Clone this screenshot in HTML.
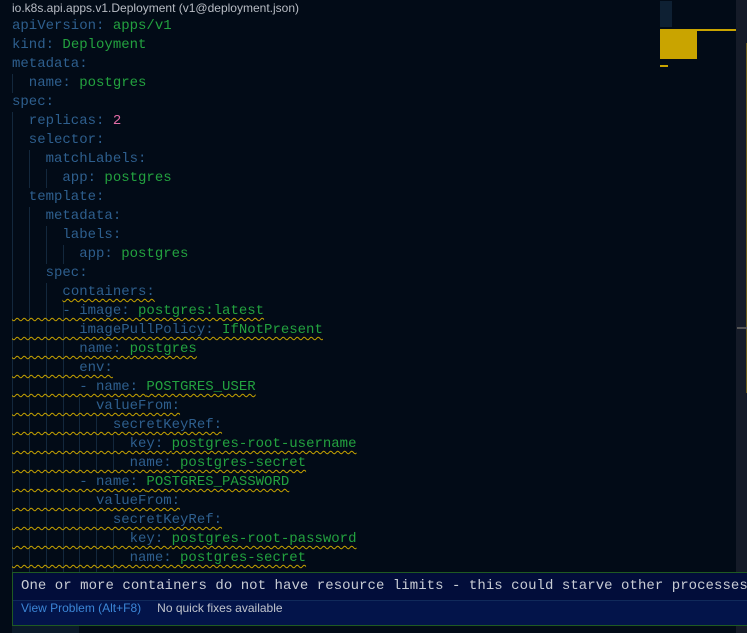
<!DOCTYPE html>
<html><head><meta charset="utf-8"><style>
body{margin:0;width:747px;height:633px;overflow:hidden;background:#020b17;font-family:"Liberation Mono",monospace;position:relative}
.t{position:absolute;left:12px;top:1px;font:12px "Liberation Sans",sans-serif;color:#b8bcc4}
.code{position:absolute;left:12px;top:17px;font-size:14px;line-height:19px;color:#2e5f8e}
.code div{height:19px;white-space:pre}
.v{color:#23a23f}.n{color:#e26ca6}
.w{text-decoration:underline wavy #c9a400;text-decoration-thickness:1px;text-underline-offset:3px}
.g{position:absolute;width:1px;background:#13283d}
.sb{position:absolute;left:736px;top:0;width:11px;height:633px;background:#151b28}
.hv{position:absolute;left:12px;top:572px;width:740px;height:52px;border:1px solid #1f5a22;background:#021043}
.msg{height:27px;line-height:26px;font-size:14px;letter-spacing:0.05px;color:#c8ccd4;padding-left:8px;white-space:pre;background:#020d3a;border-bottom:1px solid #112a5a}
.st{height:24px;line-height:23px;font:12px "Liberation Sans",sans-serif;padding-left:8px;color:#c0c4cc;background:#03144a}
.st span{color:#3c86d6;margin-right:16px}
</style></head><body>
<div class="t">io.k8s.api.apps.v1.Deployment (v1@deployment.json)</div>
<div class="g" style="left:12px;top:74px;height:19px"></div>
<div class="g" style="left:12px;top:112px;height:460px"></div>
<div class="g" style="left:29px;top:150px;height:38px"></div>
<div class="g" style="left:29px;top:207px;height:365px"></div>
<div class="g" style="left:46px;top:169px;height:19px"></div>
<div class="g" style="left:46px;top:226px;height:38px"></div>
<div class="g" style="left:46px;top:283px;height:289px"></div>
<div class="g" style="left:63px;top:245px;height:19px"></div>
<div class="g" style="left:63px;top:302px;height:270px"></div>
<div class="g" style="left:79px;top:397px;height:76px"></div>
<div class="g" style="left:79px;top:492px;height:80px"></div>
<div class="g" style="left:96px;top:416px;height:57px"></div>
<div class="g" style="left:96px;top:511px;height:61px"></div>
<div class="g" style="left:113px;top:435px;height:38px"></div>
<div class="g" style="left:113px;top:530px;height:42px"></div>
<div class="code"><div>apiVersion: <span class="v">apps/v1</span></div><div>kind: <span class="v">Deployment</span></div><div>metadata:</div><div>  name: <span class="v">postgres</span></div><div>spec:</div><div>  replicas: <span class="n">2</span></div><div>  selector:</div><div>    matchLabels:</div><div>      app: <span class="v">postgres</span></div><div>  template:</div><div>    metadata:</div><div>      labels:</div><div>        app: <span class="v">postgres</span></div><div>    spec:</div><div>      <span class="w">containers:</span></div><div><span class="w">      - image: <span class="v">postgres:latest</span></span></div><div><span class="w">        imagePullPolicy: <span class="v">IfNotPresent</span></span></div><div><span class="w">        name: <span class="v">postgres</span></span></div><div><span class="w">        env:</span></div><div><span class="w">        - name: <span class="v">POSTGRES_USER</span></span></div><div><span class="w">          valueFrom:</span></div><div><span class="w">            secretKeyRef:</span></div><div><span class="w">              key: <span class="v">postgres-root-username</span></span></div><div><span class="w">              name: <span class="v">postgres-secret</span></span></div><div><span class="w">        - name: <span class="v">POSTGRES_PASSWORD</span></span></div><div><span class="w">          valueFrom:</span></div><div><span class="w">            secretKeyRef:</span></div><div><span class="w">              key: <span class="v">postgres-root-password</span></span></div><div><span class="w">              name: <span class="v">postgres-secret</span></span></div></div>
<div class="sb"><div style="position:absolute;left:10px;top:43px;width:1px;height:350px;background:#6a5a1a"></div><div style="position:absolute;left:1px;top:327px;width:10px;height:2px;background:#555"></div></div>
<div style="position:absolute;left:660px;top:1px;width:12px;height:26px;background:#1a3550;opacity:.5"></div>
<div style="position:absolute;left:660px;top:29px;width:76px;height:2px;background:#c9a400"></div>
<div style="position:absolute;left:660px;top:31px;width:37px;height:28px;background:#c9a400"></div>
<div style="position:absolute;left:660px;top:65px;width:8px;height:2px;background:#c9a400"></div>
<div style="position:absolute;left:12px;top:625px;width:67px;height:8px;background:#0b1a2a"></div>
<div class="hv"><div class="msg">One or more containers do not have resource limits - this could starve other processes</div><div class="st"><span>View Problem (Alt+F8)</span>No quick fixes available</div></div>
</body></html>
